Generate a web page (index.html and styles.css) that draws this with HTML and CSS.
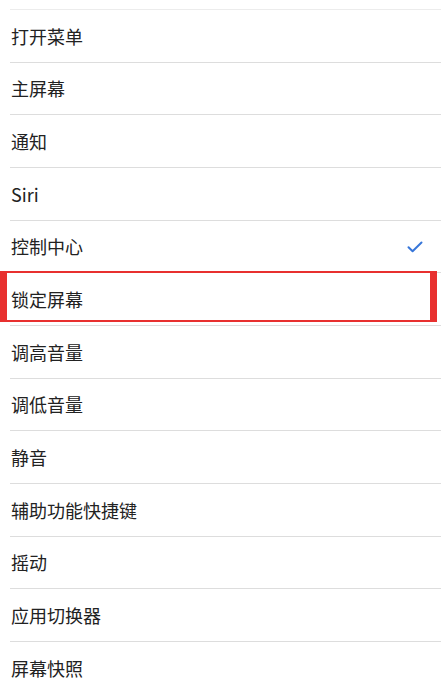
FILE: index.html
```html
<!DOCTYPE html>
<html lang="zh-CN">
  <head>
    <meta charset="UTF-8" />
    <meta name="viewport" content="width=device-width, initial-scale=1.0" />
    <title>辅助触控</title>
    <link rel="stylesheet" href="styles.css">
  </head>
  <body>
    <ul class="list">
      <li class="row">打开菜单</li>
      <li class="row">主屏幕</li>
      <li class="row">通知</li>
      <li class="row">Siri</li>
      <li class="row">
        <span>控制中心</span>
        <svg class="check" width="16" height="12" viewBox="0 0 16 12">
          <path d="M1.5 6.2 L5.6 10.2 L14.5 1.5" fill="none" stroke="#3776d9" stroke-width="2" stroke-linecap="round" stroke-linejoin="round"/>
        </svg>
      </li>
      <li class="row marked">锁定屏幕<div class="highlight"></div></li>
      <li class="row">调高音量</li>
      <li class="row">调低音量</li>
      <li class="row">静音</li>
      <li class="row">辅助功能快捷键</li>
      <li class="row">摇动</li>
      <li class="row">应用切换器</li>
      <li class="row">屏幕快照</li>
    </ul>
  </body>
</html>
```

FILE: styles.css
```css
* {
  margin: 0;
  padding: 0;
  box-sizing: border-box;
}
body {
  background-color: #ffffff;
  font-family: "Noto Sans CJK SC", "Noto Sans", sans-serif;
  color: #222222;
  overflow: hidden;
}
.list {
  list-style: none;
  padding-top: 9px;
}
.row {
  position: relative;
  display: flex;
  align-items: center;
  justify-content: space-between;
  height: 52.67px;
  margin-left: 10px;
  padding-left: 1px;
  padding-right: 18px;
  border-top: 1px solid #dddddd;
  font-size: 18px;
}
.row:first-child {
  border-top-color: #ececec;
}
.check {
  display: block;
  margin-top: 1px;
}
.highlight {
  position: absolute;
  left: -10px;
  top: -2px;
  width: 437px;
  height: 51px;
  border: 2px solid #e8302f;
  border-left-width: 7px;
  border-right-width: 7px;
}
```
